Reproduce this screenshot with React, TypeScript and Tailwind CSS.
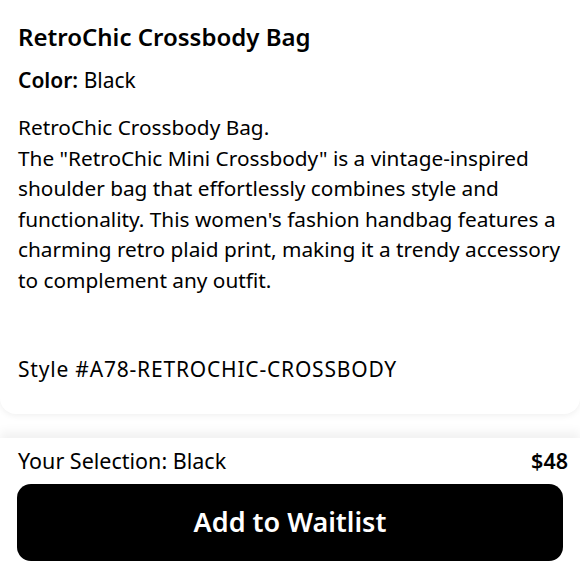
import React from 'react';

const lines = [
  'RetroChic Crossbody Bag.',
  'The "RetroChic Mini Crossbody" is a vintage-inspired',
  'shoulder bag that effortlessly combines style and',
  "functionality. This women's fashion handbag features a",
  'charming retro plaid print, making it a trendy accessory',
  'to complement any outfit.',
];

const App: React.FC = () => {
  return (
    <div
      className="w-[580px] h-[580px] bg-white text-black overflow-hidden flex flex-col"
      style={{ fontFamily: '"Noto Sans", sans-serif' }}
    >
      {/* Product details card */}
      <div className="rounded-b-2xl bg-white shadow-[0_2px_6px_rgba(0,0,0,0.06)] px-[18px] pt-[20px] h-[414px]">
        <h1 className="text-[24px] font-semibold leading-[34px]">RetroChic Crossbody Bag</h1>
        <p className="mt-[11px] text-[21px] leading-[30px]">
          <span className="font-semibold">Color:</span> Black
        </p>
        <div className="mt-[17px] text-[20.8px] leading-[30.5px] whitespace-nowrap">
          {lines.map((l) => (
            <div key={l}>{l}</div>
          ))}
        </div>
        <p className="mt-[59px] text-[21px] tracking-[0.8px] leading-[30px]">Style #A78-RETROCHIC-CROSSBODY</p>
      </div>

      {/* Bottom bar */}
      <div className="mt-auto bg-white shadow-[0_-6px_10px_rgba(0,0,0,0.06)] px-[18px] pt-[9px] h-[142px]">
        <div className="flex items-center justify-between text-[21.5px] leading-[28px]">
          <span>Your Selection: Black</span>
          <span className="font-semibold mr-[-6px]">$48</span>
        </div>
        <button className="mt-[9px] w-[546px] -ml-[1px] h-[77px] rounded-[14px] bg-black text-white text-[27px] font-semibold">
          Add to Waitlist
        </button>
      </div>
    </div>
  );
};

export default App;
